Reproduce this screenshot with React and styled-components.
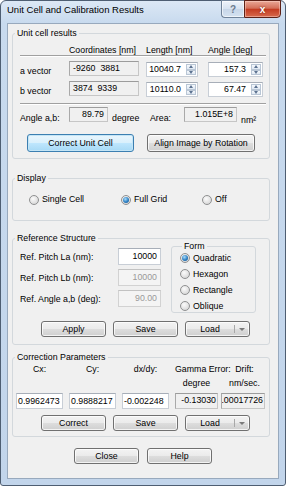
import React from "react";
import styled, { createGlobalStyle, css } from "styled-components";

const Global = createGlobalStyle`
  html, body { margin: 0; padding: 0; background: #ffffff; }
  body {
    font-family: "Liberation Sans", Arial, sans-serif;
    font-size: 8.8px;
    color: #000;
  }
  * { box-sizing: border-box; }
`;

const Window = styled.div`
  width: 286px;
  height: 486px;
  border: 1px solid #4e5e72;
  border-radius: 6px 6px 3px 3px;
  background: linear-gradient(#dce8f5, #c8daee 22px, #c2d5eb);
  padding: 0 6px 6px;
  display: flex;
  flex-direction: column;
`;

const TitleBar = styled.div`
  height: 22px;
  flex: none;
  display: flex;
  justify-content: space-between;
  align-items: flex-start;
`;

const Title = styled.div`
  font-size: 9.5px;
  line-height: 12px;
  padding-top: 3px;
  color: #000;
`;

const CaptionButtons = styled.div`
  display: flex;
  margin: -1px -2px 0 0;
`;

const CaptionButton = styled.div`
  height: 18px;
  display: flex;
  align-items: center;
  justify-content: center;
  font-weight: bold;
`;

const HelpButton = styled(CaptionButton)`
  width: 23px;
  border: 1px solid #6f8299;
  border-right: none;
  border-radius: 0 0 0 4px;
  background: linear-gradient(#eef3fa, #d6e2f0 50%, #c7d6e8 51%, #d5e2f1);
  color: #6c7b8e;
  font-size: 10px;
  box-shadow: inset 0 0 0 1px rgba(255, 255, 255, 0.6);
`;

const CloseButton = styled(CaptionButton)`
  width: 37px;
  border: 1px solid #5d2117;
  border-radius: 0 0 4px 0;
  background: linear-gradient(#eaa897, #d4705a 45%, #c43c22 52%, #d76a4d);
  color: #fff;
  font-size: 10px;
  text-shadow: 0 0 2px #6a1a0c;
  box-shadow: inset 0 0 0 1px rgba(255, 220, 210, 0.45);
`;

const Client = styled.div`
  flex: 1;
  background: #f0f0f0;
  border: 1px solid #98a9bd;
  padding: 4px 8px 0 4px;
  display: flex;
  flex-direction: column;
`;

const Group = styled.fieldset`
  margin: ${(p) => p.$mt || 0}px 0 0 0;
  padding: 0 0 ${(p) => p.$pb || 0}px 0;
  border: 1px solid #d3d8dc;
  border-radius: 3px;
  min-width: 0;
`;

const Legend = styled.legend`
  padding: 0 2px;
  margin-left: 2px;
  line-height: 11px;
  font-size: 8.8px;
  color: #000;
`;

const Etched = styled.div`
  margin: ${(p) => p.$mt || 0}px 3px 0 7px;
  border-top: 1px solid #a0a0a0;
  box-shadow: 0 1px 0 #ffffff;
`;

const VectorHeader = styled.div`
  display: flex;
  margin: 5px 3px 0 7px;
  padding-top: 1px;
  line-height: 10px;
  border-bottom: 1px solid #a0a0a0;
  box-shadow: 0 1px 0 #ffffff;
`;

const Cell = styled.span`
  flex: none;
  width: ${(p) => p.$w}px;
`;

const Row = styled.div`
  display: flex;
  align-items: ${(p) => p.$align || "flex-start"};
  margin-top: ${(p) => p.$mt || 0}px;
  padding-left: ${(p) => (p.$pl === undefined ? 7 : p.$pl)}px;
  height: ${(p) => p.$h}px;
`;

const RowLabel = styled.div`
  width: ${(p) => p.$w}px;
  flex: none;
  align-self: ${(p) => p.$self || "auto"};
  padding-top: ${(p) => p.$pt || 0}px;
  margin-left: ${(p) => p.$ml || 0}px;
  line-height: 11px;
  white-space: nowrap;
`;

const fieldKinds = {
  edit: css`
    background: #ffffff;
    border: 1px solid #c8ced6;
    border-top-color: #a7aeb8;
    color: #000;
  `,
  read: css`
    background: #f0f0f0;
    border: 1px solid #c6c6c6;
    border-top-color: #9c9c9c;
    border-left-color: #a9a9a9;
    color: #000;
  `,
  disabled: css`
    background: #f4f4f4;
    border: 1px solid #d2d2d2;
    border-top-color: #c2c2c2;
    color: #9a9a9a;
  `,
};

const Field = styled.div`
  flex: none;
  width: ${(p) => p.$w}px;
  height: ${(p) => p.$h || 15}px;
  margin-left: ${(p) => p.$ml || 0}px;
  display: flex;
  justify-content: ${(p) => (p.$align === "right" ? "flex-end" : "flex-start")};
  align-items: ${(p) => (p.$valign === "top" ? "flex-start" : "center")};
  padding: ${(p) => (p.$valign === "top" ? "1px" : "0")} ${(p) => (p.$tight ? 1 : 3)}px 0;
  line-height: 11px;
  white-space: pre;
  overflow: hidden;
  ${(p) => fieldKinds[p.$kind || "edit"]}
`;

const SpinBox = styled.div`
  flex: none;
  width: ${(p) => p.$w}px;
  height: 15px;
  margin: 1px 0 0 ${(p) => p.$ml || 0}px;
  display: flex;
  align-items: stretch;
  background: #fff;
  border: 1px solid #c8ced6;
  border-top-color: #a7aeb8;
`;

const SpinValue = styled.div`
  flex: 1;
  text-align: right;
  padding-right: 5px;
  line-height: 13px;
  color: #000;
`;

const SpinButtons = styled.div`
  width: 11px;
  display: flex;
  flex-direction: column;
  padding: 1px 1px 1px 0;
`;

const SpinButton = styled.div`
  flex: 1;
  border: 1px solid #b9c6d5;
  background: linear-gradient(#f6f9fc, #dfe8f2);
  display: flex;
  align-items: center;
  justify-content: center;
  &::after {
    content: "";
    border-left: 2.5px solid transparent;
    border-right: 2.5px solid transparent;
    ${(p) =>
      p.$up
        ? css`border-bottom: 3px solid #5d7391;`
        : css`border-top: 3px solid #5d7391;`}
  }
`;

function Spin({ value, w, ml }) {
  return (
    <SpinBox $w={w} $ml={ml}>
      <SpinValue>{value}</SpinValue>
      <SpinButtons>
        <SpinButton $up />
        <SpinButton />
      </SpinButtons>
    </SpinBox>
  );
}

const ButtonRow = styled.div`
  display: flex;
  gap: ${(p) => p.$gap || 7}px;
  margin-top: ${(p) => p.$mt || 0}px;
  padding-left: ${(p) => p.$pl || 0}px;
`;

const Button = styled.div`
  flex: none;
  width: ${(p) => p.$w || 65}px;
  height: ${(p) => p.$h || 16}px;
  display: flex;
  align-items: center;
  justify-content: center;
  border: 1px solid #707070;
  border-radius: 3px;
  background: linear-gradient(#f3f3f3, #ebebeb 48%, #dddddd 52%, #cfcfcf);
  box-shadow: inset 0 0 0 1px rgba(255, 255, 255, 0.75);
  color: #000;
  line-height: 11px;
  white-space: nowrap;
  ${(p) =>
    p.$focus &&
    css`
      border-color: #3c7fb1;
      background: linear-gradient(#eaf6fd, #d9f0fc 48%, #bee6fd 52%, #a7d9f5);
      box-shadow: inset 0 0 0 1px #c4e5f6;
    `}
`;

const SplitMain = styled.span`
  flex: 1;
  text-align: center;
`;

const SplitArrow = styled.span`
  width: 15px;
  align-self: stretch;
  display: flex;
  align-items: center;
  justify-content: center;
  border-left: 1px solid #a8a8a8;
  margin: 3px 0;
  &::after {
    content: "";
    border-left: 3px solid transparent;
    border-right: 3px solid transparent;
    border-top: 3px solid #7a7a7a;
  }
`;

function SplitButton({ children }) {
  return (
    <Button>
      <SplitMain>{children}</SplitMain>
      <SplitArrow />
    </Button>
  );
}

const RadioItem = styled.div`
  display: flex;
  align-items: center;
  flex: none;
  height: ${(p) => p.$h || 13}px;
  width: ${(p) => (p.$w ? `${p.$w}px` : "auto")};
  line-height: 11px;
`;

const RadioDot = styled.span`
  width: 10px;
  height: 10px;
  flex: none;
  margin-right: 3px;
  border-radius: 50%;
  border: 1px solid #8f9091;
  background: radial-gradient(circle at 40% 35%, #fbfbfb, #dcdcdc 70%, #cfcfcf);
  display: flex;
  align-items: center;
  justify-content: center;
  ${(p) =>
    p.$on &&
    css`
      &::after {
        content: "";
        width: 6px;
        height: 6px;
        border-radius: 50%;
        background: radial-gradient(circle at 40% 35%, #a9dcfb, #2d7fc2 55%, #0d4f8c);
      }
    `}
`;

function Radio({ label, on, w, h }) {
  return (
    <RadioItem $w={w} $h={h}>
      <RadioDot $on={on} />
      {label}
    </RadioItem>
  );
}

const RefBody = styled.div`
  display: flex;
  padding-left: 7px;
`;

const RefFields = styled.div`
  display: flex;
  flex-direction: column;
  gap: 4px;
  margin-top: 4px;
  width: 151px;
`;

const FormGroup = styled.fieldset`
  margin: -3px 0 0 0;
  padding: 0 0 0 8px;
  width: 85px;
  border: 1px solid #d3d8dc;
  border-radius: 3px;
  min-width: 0;
`;

const FormList = styled.div`
  margin: -2px 0 -2px;
`;

const ParamGrid = styled.div`
  display: grid;
  grid-template-columns: 47px 47px 47px 43px 44px;
  column-gap: 6px;
  padding-left: 3px;
  & > :last-child { margin-left: -3px; }
`;

const ParamHeader = styled(ParamGrid)`
  margin-top: -1px;
  line-height: 14px;
  text-align: center;
`;

const HeadCell = styled.div`
  white-space: pre;
`;

const ParamFields = styled(ParamGrid)`
  margin-top: 3px;
`;

const vectors = [
  { name: "a vector", coords: "-9260  3881", length: "10040.7", angle: "157.3" },
  { name: "b vector", coords: "3874  9339", length: "10110.0", angle: "67.47" },
];

const refFields = [
  { label: "Ref. Pitch La (nm):", value: "10000", kind: "edit" },
  { label: "Ref. Pitch Lb (nm):", value: "10000", kind: "disabled" },
  { label: "Ref. Angle a,b (deg):", value: "90.00", kind: "disabled" },
];

const forms = ["Quadratic", "Hexagon", "Rectangle", "Oblique"];

const params = [
  { head: "Cx:", value: "0.9962473", kind: "edit", align: "left", w: 47 },
  { head: "Cy:", value: "0.9888217", kind: "edit", align: "left", w: 47 },
  { head: "dx/dy:", value: "-0.002248", kind: "edit", align: "left", w: 47 },
  { head: "Gamma Error:\ndegree", value: "-0.13030", kind: "read", align: "right", w: 43 },
  { head: "Drift:\nnm/sec.", value: ".00017726", kind: "read", align: "right", w: 44 },
];

export default function App() {
  return (
    <>
      <Global />
      <Window>
        <TitleBar>
          <Title>Unit Cell and Calibration Results</Title>
          <CaptionButtons>
            <HelpButton>?</HelpButton>
            <CloseButton>x</CloseButton>
          </CaptionButtons>
        </TitleBar>
        <Client>
          <Group $pb={6}>
            <Legend>Unit cell results</Legend>
            <VectorHeader>
              <Cell $w={49} />
              <Cell $w={77}>Coordinates [nm]</Cell>
              <Cell $w={62}>Length [nm]</Cell>
              <Cell $w={55}>Angle [deg]</Cell>
            </VectorHeader>
            {vectors.map((v, i) => (
              <Row key={v.name} $mt={i === 0 ? 5 : 4} $h={16}>
                <RowLabel $w={49} $self="flex-end">{v.name}</RowLabel>
                <Field $kind="read" $w={70} $valign="top">{v.coords}</Field>
                <Spin value={v.length} w={52} ml={7} />
                <Spin value={v.angle} w={55} ml={10} />
              </Row>
            ))}
            <Etched $mt={6} />
            <Row $mt={3} $h={15}>
              <RowLabel $w={49} $pt={6}>Angle a,b:</RowLabel>
              <Field $kind="read" $w={39} $align="right" $valign="top">89.79</Field>
              <RowLabel $w={38} $ml={4} $pt={6}>degree</RowLabel>
              <RowLabel $w={34} $pt={6}>Area:</RowLabel>
              <Field $kind="read" $w={53} $align="right" $valign="top">1.015E+8</Field>
              <RowLabel $w={20} $ml={4} $pt={8}>nm²</RowLabel>
            </Row>
            <ButtonRow $mt={12} $pl={14} $gap={13}>
              <Button $w={107} $h={18} $focus>Correct Unit Cell</Button>
              <Button $w={108} $h={18}>Align Image by Rotation</Button>
            </ButtonRow>
          </Group>

          <Group $mt={14} $pb={14}>
            <Legend>Display</Legend>
            <Row $mt={9} $h={13} $pl={16} $align="center">
              <Radio label="Single Cell" w={92} />
              <Radio label="Full Grid" w={81} on />
              <Radio label="Off" />
            </Row>
          </Group>

          <Group $mt={12} $pb={7}>
            <Legend>Reference Structure</Legend>
            <RefBody>
              <RefFields>
                {refFields.map((f) => (
                  <Row key={f.label} $h={17} $pl={0} $align="center">
                    <RowLabel $w={98} $pt={2}>{f.label}</RowLabel>
                    <Field $kind={f.kind} $w={43} $h={17} $align="right">{f.value}</Field>
                  </Row>
                ))}
              </RefFields>
              <FormGroup>
                <Legend>Form</Legend>
                <FormList>
                  {forms.map((f, i) => (
                    <Radio key={f} label={f} on={i === 0} h={16} />
                  ))}
                </FormList>
              </FormGroup>
            </RefBody>
            <ButtonRow $mt={8} $pl={28}>
              <Button>Apply</Button>
              <Button>Save</Button>
              <SplitButton>Load</SplitButton>
            </ButtonRow>
          </Group>

          <Group $mt={7} $pb={5}>
            <Legend>Correction Parameters</Legend>
            <ParamHeader>
              {params.map((p) => (
                <HeadCell key={p.head}>{p.head}</HeadCell>
              ))}
            </ParamHeader>
            <ParamFields>
              {params.map((p) => (
                <Field
                  key={p.head}
                  $kind={p.kind}
                  $w={p.w}
                  $h={16}
                  $tight
                  $align={p.align}
                  $valign={p.kind === "read" ? "top" : "center"}
                >
                  {p.value}
                </Field>
              ))}
            </ParamFields>
            <ButtonRow $mt={6} $pl={28}>
              <Button>Correct</Button>
              <Button>Save</Button>
              <SplitButton>Load</SplitButton>
            </ButtonRow>
          </Group>

          <ButtonRow $mt={11} $pl={62} $gap={8}>
            <Button>Close</Button>
            <Button>Help</Button>
          </ButtonRow>
        </Client>
      </Window>
    </>
  );
}
